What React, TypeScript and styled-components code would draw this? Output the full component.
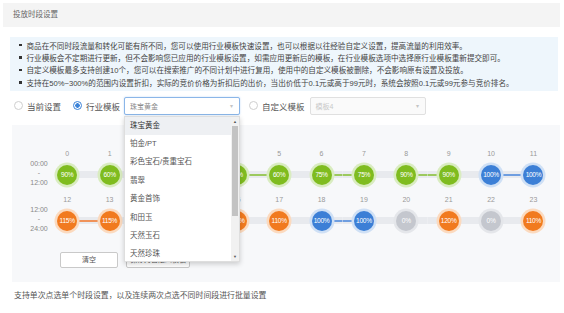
import React from "react";
import styled, { createGlobalStyle } from "styled-components";

const GlobalStyle = createGlobalStyle`
  html, body { margin: 0; padding: 0; background: #fff; }
  body {
    font-family: "Liberation Sans", "Noto Sans CJK SC", sans-serif;
    color: #555;
  }
`;

type Tone = "green" | "blue" | "orange" | "gray";

const tones: Record<Tone, { fill: string; halo: string; link: string }> = {
  green: { fill: "#7fbc1f", halo: "#d9ecc0", link: "#9cc95e" },
  blue: { fill: "#3c7fd6", halo: "#cfe0f5", link: "#6f9ee0" },
  orange: { fill: "#f17a1f", halo: "#fbdabf", link: "#f0935a" },
  gray: { fill: "#c4c7ce", halo: "#e4e6ea", link: "#d0d3d8" },
};

const toneOf = (v: number): Tone =>
  v === 0 ? "gray" : v < 100 ? "green" : v === 100 ? "blue" : "orange";

const band = "#e8eaee";

const Page = styled.div`
  padding: 3px 4px 0 3px;
`;

const Header = styled.div`
  height: 24px;
  line-height: 24px;
  background: #f4f4f4;
  padding-left: 10px;
  font-size: 7.5px;
  color: #666;
`;

const Notice = styled.ul`
  margin: 10px 2px 0 7px;
  padding: 2px 0 2px 9px;
  list-style: none;
  background: #eef6fc;
`;

const NoticeItem = styled.li`
  display: flex;
  align-items: center;
  gap: 5px;
  height: 12.4px;
  font-size: 7.6px;
  color: #444;
  white-space: nowrap;

  &::before {
    content: "";
    width: 2.5px;
    height: 2.5px;
    background: #333;
    flex: none;
  }
`;

const ModeRow = styled.div`
  display: flex;
  align-items: center;
  height: 18px;
  margin-top: 6px;
  padding-left: 11px;
`;

const Option = styled.label<{ $before?: number; $after: number }>`
  display: flex;
  align-items: center;
  gap: 4px;
  margin-left: ${(p) => p.$before ?? 0}px;
  margin-right: ${(p) => p.$after}px;
  font-size: 8.5px;
  color: #555;
  white-space: nowrap;
`;

const Radio = styled.span<{ $on?: boolean }>`
  box-sizing: border-box;
  width: 9px;
  height: 9px;
  border-radius: 50%;
  border: 1px solid ${(p) => (p.$on ? "#3c83d8" : "#cfcfcf")};
  background: ${(p) =>
    p.$on ? "radial-gradient(circle, #3c83d8 0 2px, #fff 2.5px)" : "#fff"};
`;

const SelectWrap = styled.div`
  position: relative;
  width: 116px;
`;

const SelectBox = styled.div<{ $disabled?: boolean }>`
  box-sizing: border-box;
  height: 18px;
  display: flex;
  align-items: center;
  justify-content: space-between;
  padding: 0 6px 0 5px;
  border: 1px solid ${(p) => (p.$disabled ? "#e0e0e0" : "#8bb6e8")};
  border-radius: 2px;
  background: ${(p) => (p.$disabled ? "#fafafa" : "#fff")};
  box-shadow: ${(p) => (p.$disabled ? "none" : "0 0 2px rgba(70,140,230,0.35)")};
  font-size: 7px;
  color: ${(p) => (p.$disabled ? "#c9c9c9" : "#8a8a8a")};
`;

const Caret = styled.span`
  font-size: 6px;
  color: #c4c4c4;
`;

const Dropdown = styled.div`
  position: absolute;
  top: 19px;
  left: 0;
  z-index: 5;
  width: 116px;
  height: 146px;
  box-sizing: border-box;
  display: flex;
  background: #fff;
  border: 1px solid #dedede;
  box-shadow: 0 2px 5px rgba(0, 0, 0, 0.18);
  overflow: hidden;
`;

const OptionList = styled.div`
  flex: 1;
`;

const OptionItem = styled.div<{ $active?: boolean }>`
  height: 18.4px;
  line-height: 18.4px;
  padding-left: 5px;
  font-size: 7.5px;
  color: ${(p) => (p.$active ? "#333" : "#555")};
  background: ${(p) => (p.$active ? "#eef0f3" : "transparent")};
  white-space: nowrap;
`;

const Scrollbar = styled.div`
  width: 8px;
  display: flex;
  flex-direction: column;
  align-items: center;
  background: #f1f1f1;
`;

const ScrollArrow = styled.span`
  height: 9px;
  line-height: 9px;
  font-size: 4px;
  color: #555;
`;

const ScrollThumb = styled.div`
  width: 6px;
  height: 90px;
  background: #c3c3c3;
`;

const ScrollRest = styled.div`
  flex: 1;
`;

const Board = styled.div`
  margin: 10px 0 0 9px;
  padding: 23px 0 14px 0;
  background: #f7f8fa;
`;

const SlotRow = styled.div`
  display: grid;
  grid-template-columns: 34px repeat(12, 42.4px);
  height: 46px;
`;

const TimeLabel = styled.div`
  padding: 11px 0 0 20px;
  width: 14px;
  display: flex;
  flex-direction: column;
  align-items: center;
  font-size: 7px;
  line-height: 9.5px;
  color: #888;
`;

const Slot = styled.div`
  display: flex;
  flex-direction: column;
  align-items: center;
`;

const SlotNo = styled.div`
  height: 12px;
  line-height: 12px;
  margin-bottom: 5px;
  font-size: 7px;
  color: #999;
`;

const Track = styled.div<{ $first: boolean; $last: boolean; $linkL?: string; $linkR?: string }>`
  align-self: stretch;
  height: 20px;
  display: flex;
  justify-content: center;
  align-items: center;
  background: ${(p) =>
    [
      p.$linkL ? `linear-gradient(${p.$linkL}, ${p.$linkL}) left center / 50% 2px no-repeat` : null,
      p.$linkR ? `linear-gradient(${p.$linkR}, ${p.$linkR}) right center / 50% 2px no-repeat` : null,
      p.$first
        ? `linear-gradient(${band}, ${band}) right center / 50% 7px no-repeat`
        : p.$last
        ? `linear-gradient(${band}, ${band}) left center / 50% 7px no-repeat`
        : `linear-gradient(${band}, ${band}) center / 100% 7px no-repeat`,
    ]
      .filter(Boolean)
      .join(", ")};
`;

const Dot = styled.div<{ $tone: Tone }>`
  width: 20px;
  height: 20px;
  border-radius: 50%;
  background: ${(p) => tones[p.$tone].fill};
  box-shadow: 0 0 0 2.5px ${(p) => tones[p.$tone].halo};
  display: flex;
  align-items: center;
  justify-content: center;
  color: #fff;
  font-size: 6.6px;
  letter-spacing: -0.3px;
`;

const Actions = styled.div`
  display: flex;
  gap: 8px;
  margin: 12px 0 0 48px;
`;

const Button = styled.div<{ $w: number }>`
  box-sizing: border-box;
  width: ${(p) => p.$w}px;
  height: 16px;
  line-height: 14px;
  text-align: center;
  border: 1px solid #c9c9c9;
  border-radius: 2px;
  background: #fff;
  font-size: 7px;
  color: #555;
  white-space: nowrap;
`;

const Footnote = styled.div`
  margin: 8px 0 0 11px;
  height: 12px;
  line-height: 12px;
  font-size: 7.9px;
  color: #555;
`;

const notices = [
  "商品在不同时段流量和转化可能有所不同，您可以使用行业模板快速设置，也可以根据以往经验自定义设置，提高流量的利用效率。",
  "行业模板会不定期进行更新，但不会影响您已应用的行业模板设置，如需应用更新后的模板，在行业模板选项中选择原行业模板重新提交即可。",
  "自定义模板最多支持创建10个，您可以在搜索推广的不同计划中进行复用，使用中的自定义模板被删除，不会影响原有设置及投放。",
  "支持在50%~300%的范围内设置折扣，实际的竞价价格为折扣后的出价，当出价低于0.1元或高于99元时，系统会按照0.1元或99元参与竞价排名。",
];

const industries = ["珠宝黄金", "铂金/PT", "彩色宝石/贵重宝石", "翡翠", "黄金首饰", "和田玉", "天然玉石", "天然珍珠", "钻石"];

const rows = [
  { from: "00:00", to: "12:00", start: 0, values: [90, 60, 75, 75, 60, 60, 75, 75, 90, 90, 100, 100] },
  { from: "12:00", to: "24:00", start: 12, values: [115, 115, 110, 110, 120, 110, 100, 100, 0, 120, 0, 110] },
];

export default function App() {
  return (
    <Page>
      <GlobalStyle />
      <Header>投放时段设置</Header>
      <Notice>
        {notices.map((n) => (
          <NoticeItem key={n}>{n}</NoticeItem>
        ))}
      </Notice>
      <ModeRow>
        <Option $after={12}>
          <Radio />
          当前设置
        </Option>
        <Option $after={4}>
          <Radio $on />
          行业模板
        </Option>
        <SelectWrap>
          <SelectBox>
            珠宝黄金<Caret>▾</Caret>
          </SelectBox>
          <Dropdown>
            <OptionList>
              {industries.map((name, i) => (
                <OptionItem key={name} $active={i === 0}>
                  {name}
                </OptionItem>
              ))}
            </OptionList>
            <Scrollbar>
              <ScrollArrow>▲</ScrollArrow>
              <ScrollThumb />
              <ScrollRest />
              <ScrollArrow>▼</ScrollArrow>
            </Scrollbar>
          </Dropdown>
        </SelectWrap>
        <Option $before={9} $after={5}>
          <Radio />
          自定义模板
        </Option>
        <SelectWrap>
          <SelectBox $disabled>
            模板4<Caret>▾</Caret>
          </SelectBox>
        </SelectWrap>
      </ModeRow>
      <Board>
        {rows.map((row) => (
          <SlotRow key={row.from}>
            <TimeLabel>
              <span>{row.from}</span>
              <span>-</span>
              <span>{row.to}</span>
            </TimeLabel>
            {row.values.map((v, i) => {
              const prev = row.values[i - 1];
              const next = row.values[i + 1];
              const link = tones[toneOf(v)].link;
              return (
                <Slot key={i}>
                  <SlotNo>{row.start + i}</SlotNo>
                  <Track
                    $first={i === 0}
                    $last={i === row.values.length - 1}
                    $linkL={prev === v ? link : undefined}
                    $linkR={next === v ? link : undefined}
                  >
                    <Dot $tone={toneOf(v)}>{v}%</Dot>
                  </Track>
                </Slot>
              );
            })}
          </SlotRow>
        ))}
        <Actions>
          <Button $w={58}>清空</Button>
          <Button $w={64}>保存为自定义模板</Button>
        </Actions>
      </Board>
      <Footnote>支持单次点选单个时段设置，以及连续两次点选不同时间段进行批量设置</Footnote>
    </Page>
  );
}
